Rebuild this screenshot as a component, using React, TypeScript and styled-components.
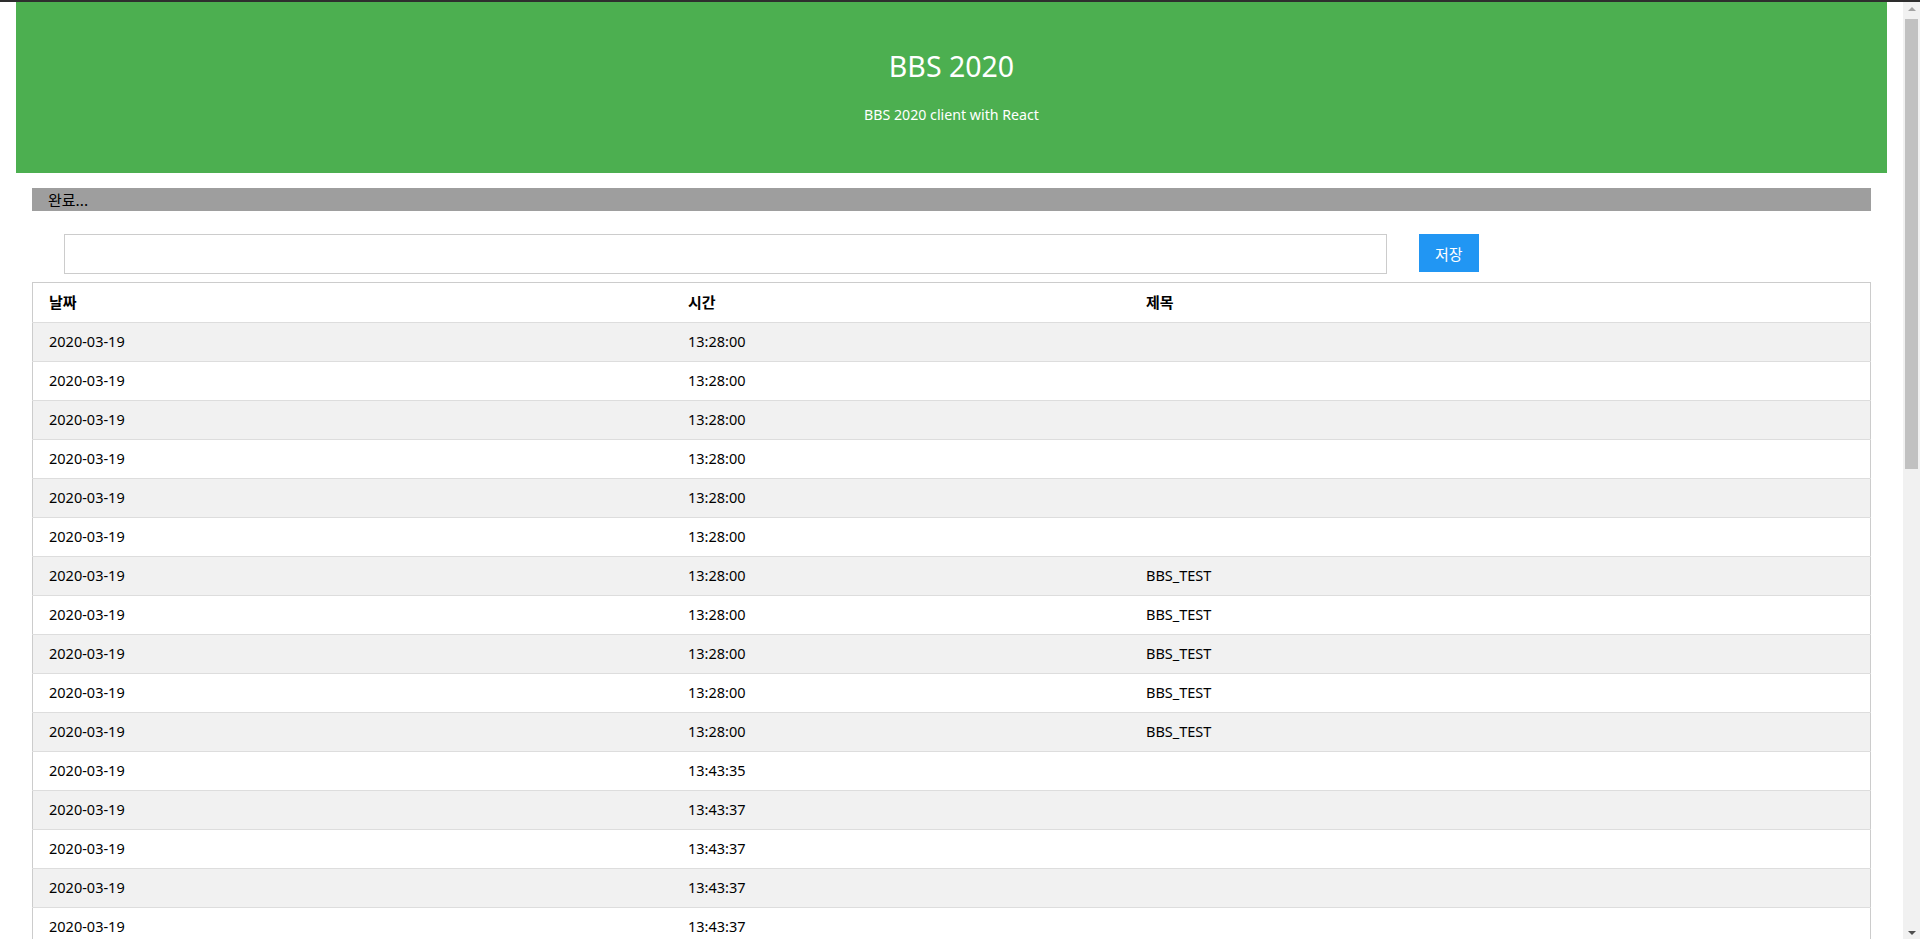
import React from "react";
import styled, { createGlobalStyle } from "styled-components";

const GlobalStyle = createGlobalStyle`
  html, body {
    margin: 0;
    padding: 0;
    height: 100%;
    overflow: hidden;
    background: #ffffff;
    font-family: "Noto Sans", "Noto Sans CJK KR", sans-serif;
    font-size: 15px;
    line-height: 1.5;
    color: #000;
  }
`;

const Frame = styled.div`
  height: 100vh;
  display: grid;
  grid-template-columns: 1fr 17px;
  grid-template-rows: 2px 1fr;
`;

const TopLine = styled.div`
  grid-column: 1 / 3;
  background: #2e2e2e;
`;

const Scroller = styled.div`
  overflow-y: auto;
  overflow-x: hidden;
  scrollbar-width: none;
  &::-webkit-scrollbar { display: none; }
`;

const Rail = styled.div`
  background: #f1f1f1;
  display: flex;
  flex-direction: column;
  align-items: center;
`;

const RailButton = styled.div`
  height: 17px;
  width: 100%;
  flex: none;
  display: flex;
  align-items: center;
  justify-content: center;
`;

const Arrow = styled.span<{ $down?: boolean }>`
  width: 0;
  height: 0;
  border-left: 4px solid transparent;
  border-right: 4px solid transparent;
  ${(p) =>
    p.$down
      ? "border-top: 4px solid #505050; margin-top: 4px;"
      : "border-bottom: 4px solid #a3a3a3; margin-top: -4px;"}
`;

const Track = styled.div`
  flex: 1;
  width: 100%;
  display: flex;
  justify-content: center;
`;

const Thumb = styled.div`
  width: 13px;
  height: 450px;
  background: #c1c1c1;
`;

const Page = styled.div`
  padding: 0 16px 16px;
`;

const Header = styled.header`
  background: #4caf50;
  color: #ffffff;
  height: 171px;
  box-sizing: border-box;
  padding-top: 42px;
  display: flex;
  flex-direction: column;
  align-items: center;
`;

const Title = styled.h1`
  margin: 0;
  font-size: 28.5px;
  line-height: 45px;
  font-weight: 400;
`;

const Subtitle = styled.p`
  margin: 14px 0 0;
  font-size: 14.2px;
  line-height: 23px;
`;

const Content = styled.main`
  padding: 15px 16px 0;
`;

const StatusBar = styled.div`
  background: #9e9e9e;
  color: #000;
  height: 23px;
  line-height: 23px;
  padding-left: 16px;
  font-family: "Noto Sans CJK KR", "Noto Sans", sans-serif;
  font-size: 15px;
`;

const FormRow = styled.div`
  display: flex;
  align-items: flex-start;
  gap: 32px;
  padding-left: 32px;
  margin-top: 23px;
`;

const TextInput = styled.input`
  width: 1323px;
  height: 40px;
  box-sizing: border-box;
  border: 1px solid #cccccc;
  padding: 8px;
  font: inherit;
  outline: none;
`;

const SaveButton = styled.button`
  height: 38px;
  padding: 0 16px;
  border: none;
  background: #2196f3;
  color: #ffffff;
  font-family: "Noto Sans CJK KR", "Noto Sans", sans-serif;
  font-size: 15px;
  cursor: pointer;
`;

const Table = styled.table`
  margin-top: 8px;
  width: 100%;
  border-collapse: collapse;
  border: 1px solid #cccccc;
  table-layout: fixed;
`;

const Row = styled.tr`
  border-bottom: 1px solid #dddddd;
  &:nth-child(even) {
    background: #f1f1f1;
  }
  &:nth-child(odd) {
    background: #ffffff;
  }
`;

const HeadCell = styled.th<{ $w?: number }>`
  text-align: left;
  padding: 8px 8px;
  height: 23px;
  font-family: "Noto Sans CJK KR", "Noto Sans", sans-serif;
  font-weight: 700;
  font-size: 15px;
  ${(p) => (p.$w ? `width: ${p.$w}px;` : "")}
  &:first-child {
    padding-left: 16px;
  }
`;

const Cell = styled.td`
  padding: 8px 8px;
  height: 22px;
  font-size: 14.5px;
  &:first-child {
    padding-left: 16px;
  }
`;

type Post = { date: string; time: string; title: string };

const posts: Post[] = [
  ...Array.from({ length: 6 }, () => ({ date: "2020-03-19", time: "13:28:00", title: "" })),
  ...Array.from({ length: 5 }, () => ({ date: "2020-03-19", time: "13:28:00", title: "BBS_TEST" })),
  { date: "2020-03-19", time: "13:43:35", title: "" },
  ...Array.from({ length: 26 }, () => ({ date: "2020-03-19", time: "13:43:37", title: "" })),
];

export default function App() {
  return (
    <>
      <GlobalStyle />
      <Frame>
        <TopLine />
        <Scroller>
          <Page>
            <Header>
              <Title>BBS 2020</Title>
              <Subtitle>BBS 2020 client with React</Subtitle>
            </Header>
            <Content>
              <StatusBar>완료...</StatusBar>
              <FormRow>
                <TextInput type="text" />
                <SaveButton>저장</SaveButton>
              </FormRow>
              <Table>
                <tbody>
                  <Row>
                    <HeadCell $w={623}>날짜</HeadCell>
                    <HeadCell $w={442}>시간</HeadCell>
                    <HeadCell>제목</HeadCell>
                  </Row>
                  {posts.map((p, i) => (
                    <Row key={i}>
                      <Cell>{p.date}</Cell>
                      <Cell>{p.time}</Cell>
                      <Cell>{p.title}</Cell>
                    </Row>
                  ))}
                </tbody>
              </Table>
            </Content>
          </Page>
        </Scroller>
        <Rail aria-hidden="true">
          <RailButton>
            <Arrow />
          </RailButton>
          <Track>
            <Thumb />
          </Track>
          <RailButton>
            <Arrow $down />
          </RailButton>
        </Rail>
      </Frame>
    </>
  );
}
